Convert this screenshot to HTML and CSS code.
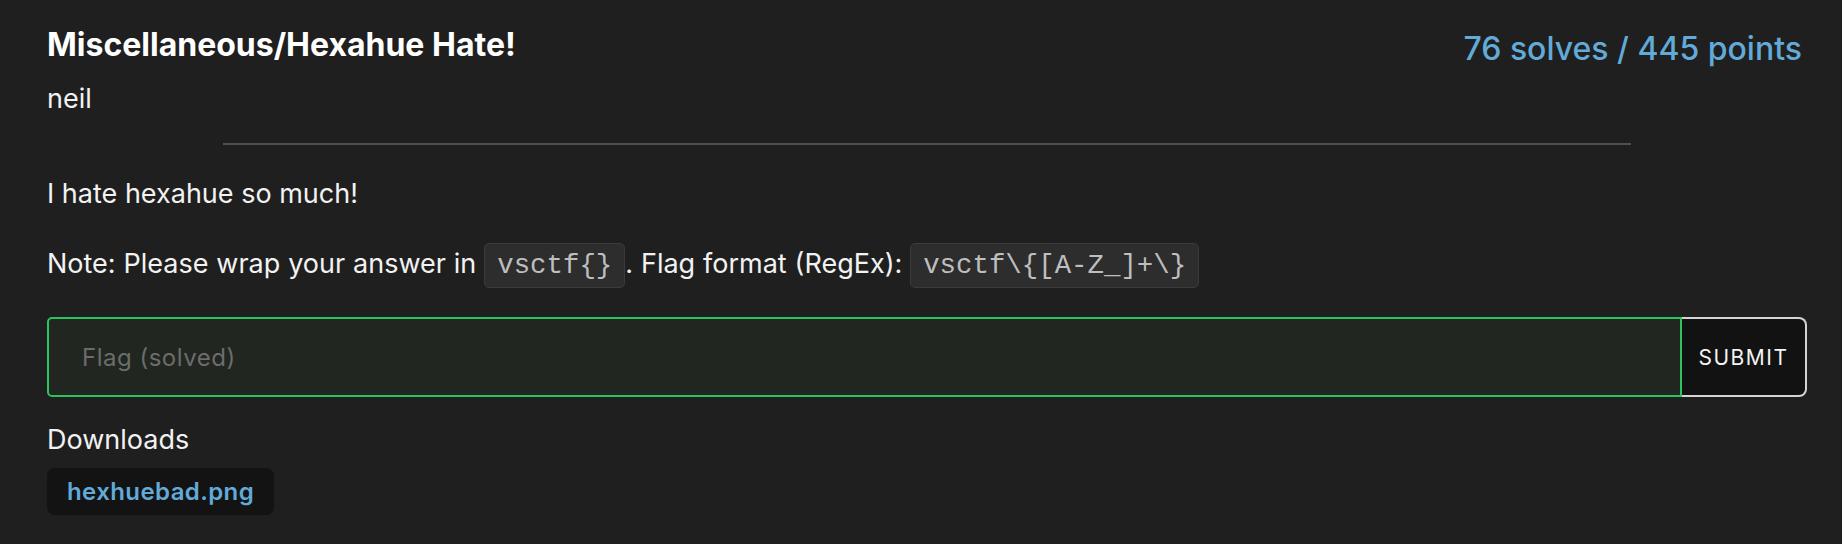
FILE: index.html
```html
<!DOCTYPE html>
<html lang="en">
<head>
<meta charset="utf-8">
<title>Miscellaneous/Hexahue Hate!</title>
<link rel="stylesheet" href="styles.css">
</head>
<body>
<main class="challenge">
  <header class="head">
    <div class="head-main">
      <h1 class="title">Miscellaneous/Hexahue Hate!</h1>
      <div class="author">neil</div>
    </div>
    <div class="stats">76 solves / 445 points</div>
  </header>
  <hr class="divider">
  <div class="desc">
    <p>I hate hexahue so much!</p>
    <p class="note">Note: Please wrap your answer in <code>vsctf{}</code>. Flag format (RegEx): <code>vsctf\{[A-Z_]+\}</code></p>
  </div>
  <form class="flag-form">
    <input class="flag-input" type="text" placeholder="Flag (solved)">
    <button class="submit" type="button">Submit</button>
  </form>
  <section class="downloads">
    <p class="dl-label">Downloads</p>
    <a class="file" href="#">hexhuebad.png</a>
  </section>
</main>
</body>
</html>
```
FILE: styles.css
```css
html, body {
  margin: 0;
  padding: 0;
  background: #1f1f1f;
}
body {
  font-family: Inter, "Noto Sans", sans-serif;
  color: #f2f2f2;
  height: 544px;
  overflow: hidden;
}
.challenge {
  padding: 26px 35px 0 47px;
}
.head {
  display: flex;
  justify-content: space-between;
  align-items: flex-start;
}
.title {
  margin: 0;
  font-size: 32px;
  line-height: 38px;
  font-weight: 700;
  color: #fff;
}
.author {
  margin-top: 19px;
  font-size: 27px;
  line-height: 32px;
  color: #f2f2f2;
}
.stats {
  font-size: 32px;
  line-height: 38px;
  font-weight: 500;
  color: #62aad8;
  padding-top: 4px;
  padding-right: 5px;
}
.divider {
  width: 80%;
  margin: 28px auto 0;
  border: none;
  height: 2px;
  background: #505050;
}
.desc p {
  margin: 0;
  font-size: 27px;
  line-height: 32px;
}
.desc p:first-child {
  margin-top: 33px;
}
.desc p.note {
  margin-top: 31px;
  line-height: 45px;
  word-spacing: 0.3px;
}
code {
  display: inline-block;
  box-sizing: border-box;
  height: 45px;
  font-family: "Liberation Mono", "DejaVu Sans Mono", monospace;
  font-size: 27.4px;
  line-height: 27px;
  word-spacing: 0;
  color: #bebebe;
  background: #2d2d2d;
  border: 1px solid #3b3b3b;
  border-radius: 5px;
  padding: 8px 12px;
  vertical-align: middle;
}
.flag-form {
  display: flex;
  margin-top: 29px;
  height: 80px;
}
.flag-input {
  flex: 1;
  box-sizing: border-box;
  height: 80px;
  background: #212620;
  border: 2px solid #2cc45c;
  border-radius: 5px 0 0 5px;
  padding: 0 33px;
  font-family: Inter, "Noto Sans", sans-serif;
  font-size: 24px;
  letter-spacing: 0.5px;
  color: #ddd;
  outline: none;
}
.flag-input::placeholder {
  color: #6c6c6c;
}
.submit {
  box-sizing: border-box;
  width: 125px;
  height: 80px;
  background: #121212;
  border: 2px solid #d4d4d4;
  border-left: none;
  border-radius: 0 8px 8px 0;
  color: #f4f4f4;
  font-family: Inter, "Noto Sans", sans-serif;
  font-size: 21px;
  letter-spacing: 1.5px;
  text-transform: uppercase;
  padding: 0;
}
.downloads {
  margin-top: 27px;
}
.dl-label {
  margin: 0;
  font-size: 27px;
  line-height: 32px;
}
.file {
  display: inline-block;
  margin-top: 12px;
  background: #131313;
  border-radius: 8px;
  padding: 0 20px;
  height: 47px;
  line-height: 47px;
  font-size: 24px;
  font-weight: 600;
  letter-spacing: 0.4px;
  color: #62aad8;
  text-decoration: none;
}
```
